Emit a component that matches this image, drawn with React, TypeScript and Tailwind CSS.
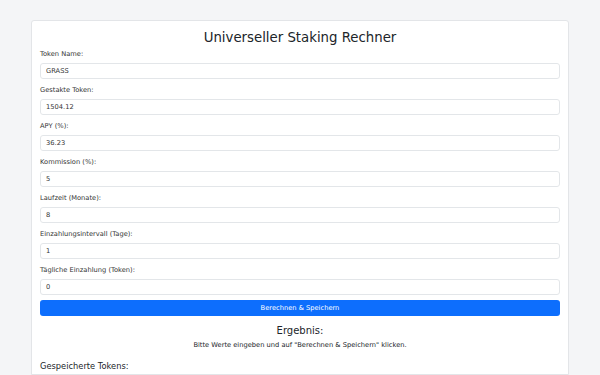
import React from "react";

const fields = [
  { label: "Token Name:", value: "GRASS" },
  { label: "Gestakte Token:", value: "1504.12" },
  { label: "APY (%):", value: "36.23" },
  { label: "Kommission (%):", value: "5" },
  { label: "Laufzeit (Monate):", value: "8" },
  { label: "Einzahlungsintervall (Tage):", value: "1" },
  { label: "Tägliche Einzahlung (Token):", value: "0" },
];

export default function App() {
  return (
    <div className="min-h-[375px] bg-[#f4f5f7] pt-5 font-['DejaVu_Sans',sans-serif] text-[#212529]">
      <div className="mx-auto w-[538px] h-[355px] overflow-hidden rounded-t-[3px] border border-[#e3e5e8] bg-white px-[8px] pt-[7px]">
        <h1 className="text-center text-[13.3px] leading-[20px]">Universeller Staking Rechner</h1>

        <div className="flex flex-col">
          {fields.map((f) => (
            <div key={f.label} className="mb-[5px]">
              <label className="block text-[6.7px] leading-[12px] text-[#333]">{f.label}</label>
              <input
                readOnly
                value={f.value}
                className="mt-[3px] block h-[16px] w-full rounded-[3px] border border-[#e3e6e9] px-[5px] text-[6.7px] text-[#333] outline-none"
              />
            </div>
          ))}
        </div>

        <button className="block h-[16px] w-full rounded-[3px] bg-[#0d6efd] text-[6.7px] text-white">
          Berechnen &amp; Speichern
        </button>

        <h2 className="mt-[8px] text-center text-[10px] leading-[14px]">Ergebnis:</h2>
        <p className="mt-[3px] text-center text-[6.7px] leading-[9px]">
          Bitte Werte eingeben und auf "Berechnen &amp; Speichern" klicken.
        </p>

        <h3 className="mt-[10px] text-[8.3px] leading-[12px]">Gespeicherte Tokens:</h3>
      </div>
    </div>
  );
}
